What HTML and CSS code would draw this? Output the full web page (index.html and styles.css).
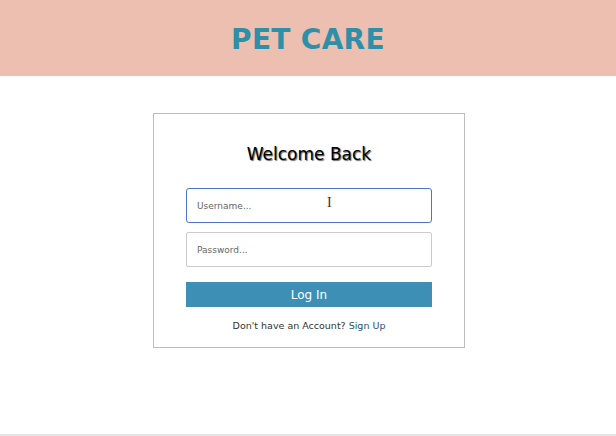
FILE: index.html
```html
<!DOCTYPE html>
<html lang="en">
<head>
<meta charset="utf-8">
<title>Pet Care - Log In</title>
<link rel="stylesheet" href="styles.css">
</head>
<body>
<div class="page">
  <header class="topbar">
    <h1 class="brand">PET CARE</h1>
  </header>
  <main class="main">
    <form class="card">
      <h2 class="card-title">Welcome Back</h2>
      <div class="field-wrap">
        <input class="field field-focus" type="text" placeholder="Username...">
        <span class="cursor">I</span>
      </div>
      <input class="field" type="password" placeholder="Password...">
      <button class="btn" type="button">Log In</button>
      <p class="alt">Don't have an Account? <a class="alt-link" href="#">Sign Up</a></p>
    </form>
  </main>
  <footer class="foot"></footer>
</div>
</body>
</html>
```
FILE: styles.css
```css
html, body {
  margin: 0;
  padding: 0;
  background: #ffffff;
}
body {
  font-family: "Comic Sans MS", "DejaVu Sans", sans-serif;
}
.page {
  height: 100vh;
  display: flex;
  flex-direction: column;
}
.topbar {
  height: 76px;
  background: #ecbfb0;
  display: flex;
  align-items: center;
  justify-content: center;
  flex-shrink: 0;
}
.brand {
  margin: 2px 0 0 0;
  font-size: 28px;
  font-weight: bold;
  color: #2e90a8;
  letter-spacing: 0.3px;
}
.main {
  flex: 1;
  display: flex;
  justify-content: center;
  align-items: flex-start;
  padding: 37px 0 0 2px;
}
.card {
  width: 246px;
  border: 1px solid #bdbdbd;
  padding: 28px 32px 13px 32px;
  display: flex;
  flex-direction: column;
}
.card-title {
  margin: 0 0 22px 0;
  height: 24px;
  line-height: 24px;
  font-size: 17px;
  font-weight: normal;
  text-align: center;
  color: #000;
  text-shadow: 1px 1px 1px #666;
}
.field-wrap {
  position: relative;
  display: flex;
  flex-direction: column;
}
.field {
  box-sizing: border-box;
  width: 100%;
  height: 35px;
  border: 1px solid #cccccc;
  border-radius: 2px;
  padding: 0 10px;
  font-family: inherit;
  font-size: 9px;
  color: #333;
  outline: none;
}
.field::placeholder {
  color: #666;
}
.field-focus {
  border: 1.5px solid #4a78c8;
  border-radius: 3px;
  margin-bottom: 9px;
}
.cursor {
  position: absolute;
  left: 141px;
  top: 7px;
  font-family: "Liberation Serif", serif;
  font-size: 14px;
  color: #333;
}
.btn {
  margin-top: 15px;
  height: 25px;
  border: none;
  background: #3d8fb5;
  color: #ffffff;
  font-family: inherit;
  font-size: 12px;
  padding: 0;
}
.alt {
  margin: 11px 0 0 0;
  height: 16px;
  line-height: 16px;
  text-align: center;
  font-size: 9.5px;
  color: #333;
}
.alt-link {
  color: #1d5274;
  text-decoration: none;
}
.foot {
  height: 2px;
  background: #e3e3e3;
  flex-shrink: 0;
}
```
